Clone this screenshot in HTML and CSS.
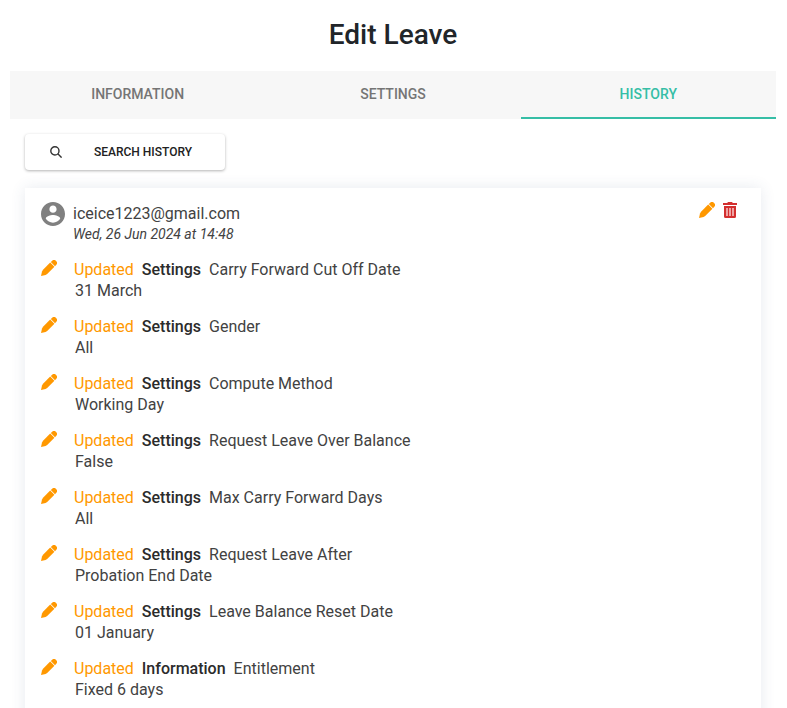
FILE: index.html
```html
<!DOCTYPE html>
<html lang="en">
<head>
<meta charset="UTF-8">
<meta name="viewport" content="width=device-width, initial-scale=1.0">
<title>Edit Leave</title>
<link rel="stylesheet" href="styles.css">
</head>
<body>

<!-- Shared icons -->
<svg class="sprite" aria-hidden="true">
    <symbol id="pencil" viewBox="0 0 16 16">
        <path d="M9.2 2.6 13.4 6.8 6.2 14 4.6 15 0 16l1-4.6 1-1.6z"/>
        <path d="M9.8 2 11.2.7a2.6 2.6 0 0 1 3.6 0l.5.5a2.6 2.6 0 0 1 0 3.6L14 6.2z"/>
    </symbol>
</svg>

<main class="dialog">
    <h1 class="title">Edit Leave</h1>

    <!-- Tabs -->
    <div class="tabs" role="tablist">
        <button class="tab" type="button" role="tab">Information</button>
        <button class="tab" type="button" role="tab">Settings</button>
        <button class="tab active" type="button" role="tab" aria-selected="true">History</button>
    </div>

    <!-- History panel -->
    <div class="panel">
        <button class="search-btn" type="button">
            <svg class="search-icon" viewBox="0 0 12 12" aria-hidden="true">
                <circle cx="4.9" cy="4.9" r="4.1"/>
                <path d="M7.8 7.8 11.6 11.6"/>
            </svg>
            <span class="search-text">Search History</span>
        </button>

        <section class="card">
            <header class="card-header">
                <svg class="avatar" viewBox="2 2 20 20" aria-hidden="true">
                    <path d="M12 2C6.48 2 2 6.48 2 12s4.48 10 10 10 10-4.48 10-10S17.52 2 12 2zm0 3c1.66 0 3 1.34 3 3s-1.34 3-3 3-3-1.34-3-3 1.34-3 3-3zm0 14.2c-2.5 0-4.71-1.28-6-3.22.03-1.99 4-3.08 6-3.08 1.99 0 5.97 1.09 6 3.08-1.29 1.94-3.5 3.22-6 3.22z"/>
                </svg>
                <div class="user">
                    <div class="email">iceice1223@gmail.com</div>
                    <div class="date">Wed, 26 Jun 2024 at 14:48</div>
                </div>
                <div class="actions">
                    <button class="icon-btn" type="button" aria-label="Edit">
                        <svg class="pencil"><use href="#pencil"/></svg>
                    </button>
                    <button class="icon-btn" type="button" aria-label="Delete">
                        <svg class="trash" viewBox="0 0 14 16">
                            <path class="trash-back" d="M2 5h10v9H2z"/>
                            <path d="M0 1h4.2l.8-1h4l.8 1H14v2H0z"/>
                            <path fill-rule="evenodd" d="M1 4h12v10.5a1.5 1.5 0 0 1-1.5 1.5h-9A1.5 1.5 0 0 1 1 14.5zM3 6v8h2V6zm3 0v8h2V6zm3 0v8h2V6z"/>
                        </svg>
                    </button>
                </div>
            </header>

            <ul class="changes">
                <li class="change">
                    <svg class="pencil"><use href="#pencil"/></svg>
                    <div>
                        <div class="change-title"><span class="action">Updated</span><span class="group">Settings</span><span>Carry Forward Cut Off Date</span></div>
                        <div class="value">31 March</div>
                    </div>
                </li>
                <li class="change">
                    <svg class="pencil"><use href="#pencil"/></svg>
                    <div>
                        <div class="change-title"><span class="action">Updated</span><span class="group">Settings</span><span>Gender</span></div>
                        <div class="value">All</div>
                    </div>
                </li>
                <li class="change">
                    <svg class="pencil"><use href="#pencil"/></svg>
                    <div>
                        <div class="change-title"><span class="action">Updated</span><span class="group">Settings</span><span>Compute Method</span></div>
                        <div class="value">Working Day</div>
                    </div>
                </li>
                <li class="change">
                    <svg class="pencil"><use href="#pencil"/></svg>
                    <div>
                        <div class="change-title"><span class="action">Updated</span><span class="group">Settings</span><span>Request Leave Over Balance</span></div>
                        <div class="value">False</div>
                    </div>
                </li>
                <li class="change">
                    <svg class="pencil"><use href="#pencil"/></svg>
                    <div>
                        <div class="change-title"><span class="action">Updated</span><span class="group">Settings</span><span>Max Carry Forward Days</span></div>
                        <div class="value">All</div>
                    </div>
                </li>
                <li class="change">
                    <svg class="pencil"><use href="#pencil"/></svg>
                    <div>
                        <div class="change-title"><span class="action">Updated</span><span class="group">Settings</span><span>Request Leave After</span></div>
                        <div class="value">Probation End Date</div>
                    </div>
                </li>
                <li class="change">
                    <svg class="pencil"><use href="#pencil"/></svg>
                    <div>
                        <div class="change-title"><span class="action">Updated</span><span class="group">Settings</span><span>Leave Balance Reset Date</span></div>
                        <div class="value">01 January</div>
                    </div>
                </li>
                <li class="change">
                    <svg class="pencil"><use href="#pencil"/></svg>
                    <div>
                        <div class="change-title"><span class="action">Updated</span><span class="group">Information</span><span>Entitlement</span></div>
                        <div class="value">Fixed 6 days</div>
                    </div>
                </li>
            </ul>
        </section>
    </div>
</main>

</body>
</html>
```
FILE: styles.css
```css
body {
    margin: 0;
    font-family: Roboto, Arial, sans-serif;
    font-size: 16px;
    color: #212529;
    background-color: #fff;
}

button {
    font-family: inherit;
    border: none;
    cursor: pointer;
}

.sprite {
    display: none;
}

.dialog {
    box-sizing: border-box;
    height: 100vh;
    overflow: hidden;
    padding: 18px 11px 0 10px;
}

.title {
    margin: 0 0 19px;
    font-size: 28px;
    font-weight: 500;
    line-height: 34px;
    text-align: center;
}

/* Tabs */
.tabs {
    display: grid;
    grid-template-columns: repeat(3, 1fr);
    background-color: #f7f7f7;
}

.tab {
    height: 48px;
    padding: 0;
    border-bottom: 2px solid transparent;
    background: none;
    color: #757575;
    font-size: 14px;
    font-weight: 500;
    text-transform: uppercase;
}

.tab.active {
    color: #36bea6;
    border-bottom-color: #36bea6;
}

/* History panel */
.panel {
    padding: 15px 15px 0;
}

.search-btn {
    display: flex;
    align-items: center;
    width: 200px;
    height: 36px;
    margin-bottom: 18px;
    padding: 0 25px;
    border-radius: 4px;
    background-color: #fff;
    box-shadow: 0 1px 3px rgba(0, 0, 0, 0.3);
    color: #212121;
}

.search-icon {
    width: 12px;
    height: 12px;
    fill: none;
    stroke: #333;
    stroke-width: 1.4;
}

.search-text {
    flex: 1;
    padding-left: 24px;
    font-size: 12px;
    font-weight: 500;
    text-transform: uppercase;
}

.card {
    padding: 14px 24px 24px 16px;
    background-color: #fff;
    box-shadow: 0 0 14px rgba(60, 80, 120, 0.12);
    color: #424242;
}

.card-header {
    display: flex;
    align-items: flex-start;
}

.avatar {
    width: 24px;
    height: 24px;
    fill: #808080;
}

.user {
    flex: 1;
    padding-left: 8px;
}

.email {
    line-height: 24px;
}

.date {
    font-size: 14px;
    font-style: italic;
    line-height: 16px;
}

.actions {
    display: flex;
    gap: 8px;
}

.icon-btn {
    padding: 0;
    background: none;
}

.icon-btn svg,
.pencil {
    display: block;
    height: 16px;
}

.pencil {
    width: 16px;
    fill: #ff9800;
}

.trash {
    width: 14px;
    fill: #d32f2f;
}

.trash-back {
    fill: #eea3a3;
}

.changes {
    display: grid;
    gap: 15px;
    margin: 0;
    padding: 17px 0 0;
    list-style: none;
}

.change {
    display: flex;
    gap: 17px;
    line-height: 21px;
}

.change .pencil {
    margin-top: 1px;
}

.change-title {
    display: flex;
    gap: 8px;
}

.action {
    color: #ff9800;
}

.group {
    color: #2b2b2b;
    font-weight: 500;
}

.value {
    padding-left: 1px;
}
```
